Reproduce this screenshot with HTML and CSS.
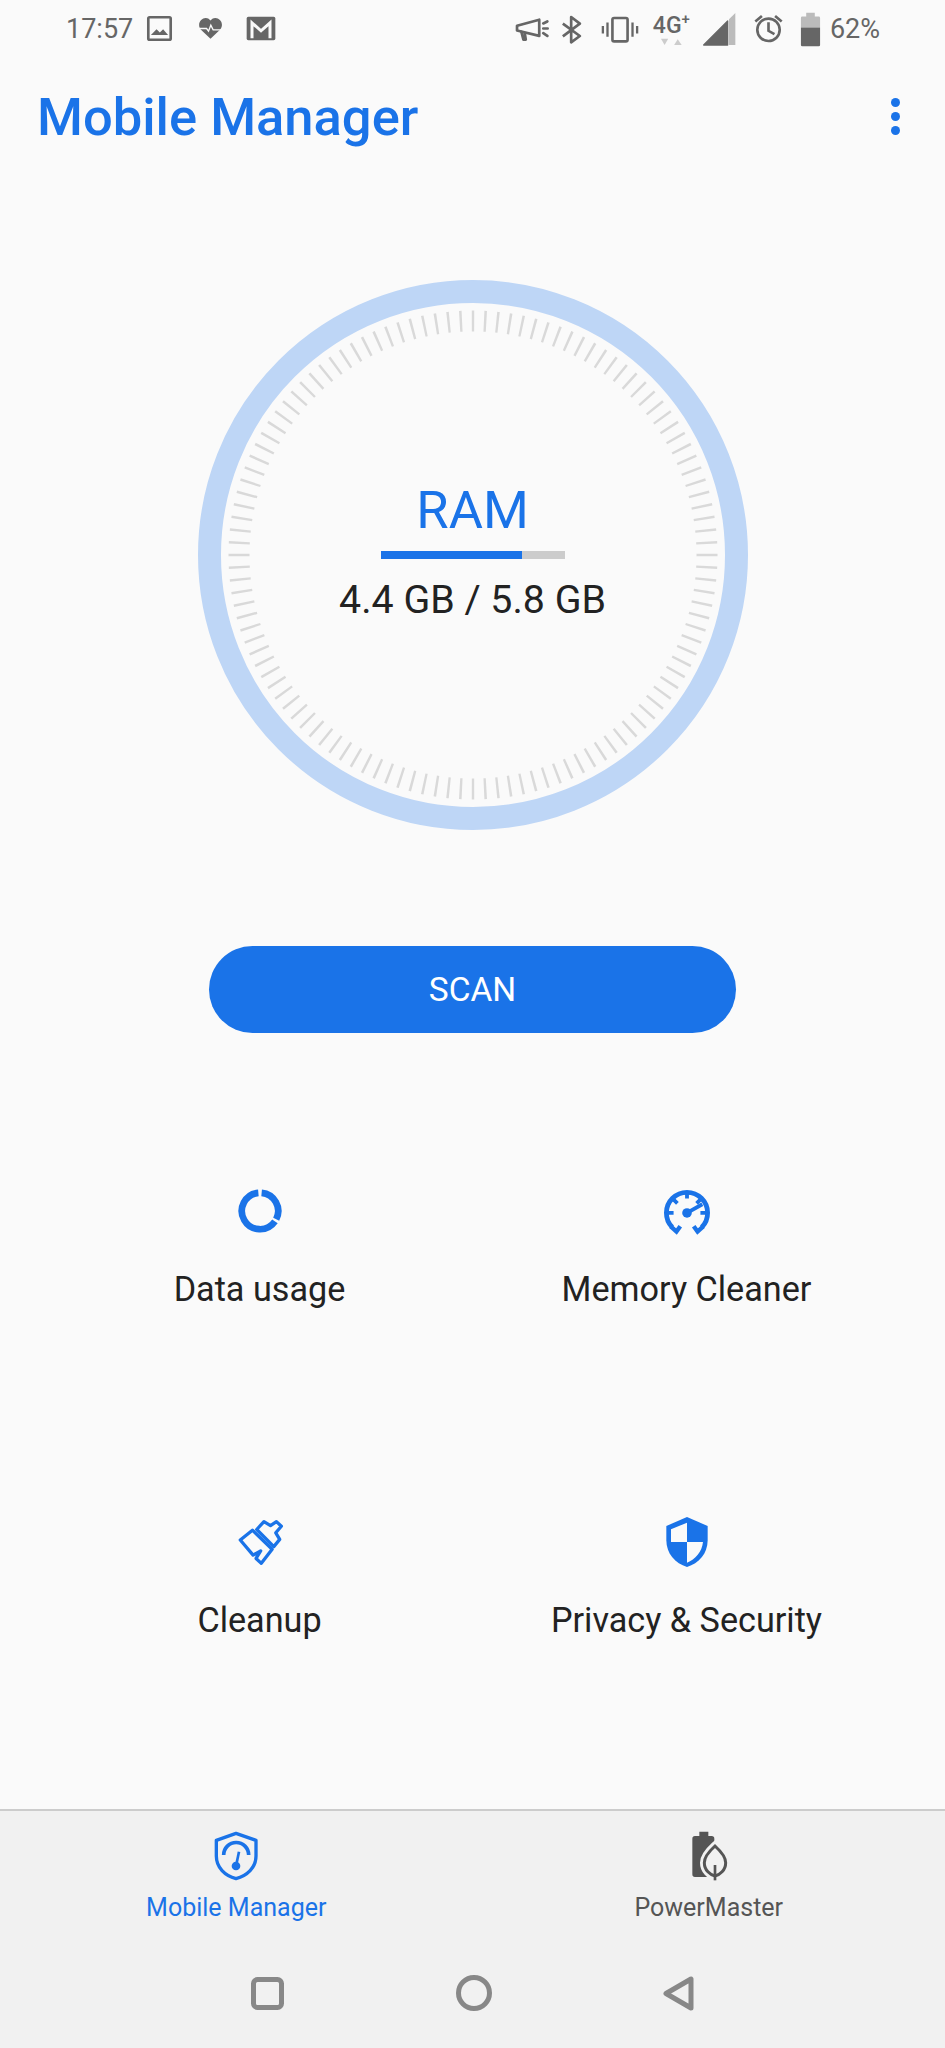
FILE: index.html
```html
<!DOCTYPE html>
<html lang="en">
<head>
  <meta charset="UTF-8">
  <meta name="viewport" content="width=device-width, initial-scale=1.0">
  <title>Mobile Manager</title>
  <link rel="stylesheet" href="styles.css">
</head>
<body>

<div class="statusbar">
  <div class="status-left">
    <span class="status-text">17:57</span>
    <svg class="si si-image" viewBox="440 42 82 82"><rect x="447" y="49" width="68" height="68" rx="4" fill="none" stroke="#666" stroke-width="8"/><path d="M455 103L472 85L482 95L492 85L507 103Z" fill="#666"/></svg>
    <svg class="si si-heart" viewBox="595 50 76 68"><path d="M633 115L604 88C590 70 605 52 618 52C626 52 630 56 633 60C636 56 640 52 648 52C662 52 676 70 662 88Z" fill="#666"/><path d="M598 84H621L627 92L634 74L641 88H668" fill="none" stroke="#fafafa" stroke-width="4"/></svg>
    <svg class="si si-mail" viewBox="740 46 90 74"><rect x="742" y="48" width="86" height="70" rx="5" fill="#666"/><path d="M758 112V66L785 90L812 66V112" fill="none" stroke="#fafafa" stroke-width="9"/></svg>
  </div>
  <div class="status-right">
    <svg class="si si-mega" viewBox="128 48 104 74"><g fill="none" stroke="#666" stroke-width="8" stroke-linecap="round" stroke-linejoin="round"><path d="M137 74L203 56V104L137 88Z"/><path d="M150 92L156 115H163L160 96"/><path d="M215 67L227 61M215 82H228M215 96L227 104"/></g></svg>
    <svg class="si si-bt" viewBox="268 40 62 87"><path d="M273 66L324 103L298 122V46L324 66L273 104" fill="none" stroke="#666" stroke-width="8" stroke-linejoin="round"/></svg>
    <svg class="si si-vib" viewBox="386 40 114 82"><rect x="420" y="46" width="46" height="71" rx="5" fill="none" stroke="#666" stroke-width="8"/><path d="M405 60V103M481 60V103M391 70V93M495 70V93" stroke="#666" stroke-width="7"/></svg>
    <div class="net">
      <span class="net-label">4G<sup>+</sup></span>
      <svg class="net-arrows" viewBox="562 112 70 22"><path d="M565 113H587L576 132Z" fill="#ccc"/><path d="M605 132H628L616 115Z" fill="#ccc"/></svg>
    </div>
    <svg class="si si-signal" viewBox="690 33 102 102"><path d="M695 132L767 60V132Z" fill="#666" stroke="#666" stroke-width="4" stroke-linejoin="round"/><path d="M771 55L790 36V132H771Z" fill="#bbb"/></svg>
    <svg class="si si-alarm" viewBox="844 38 88 89"><g fill="none" stroke="#666" stroke-width="8"><circle cx="888" cy="85" r="34"/><path d="M888 62V88L906 98"/><path d="M848 60L868 43M908 43L928 60"/></g></svg>
    <svg class="si si-batt" viewBox="984 28 62 106"><path d="M1002 30H1028V42H1040Q1044 42 1044 46V75H986V46Q986 42 990 42H1002Z" fill="#bbb"/><path d="M986 75H1044V128Q1044 132 1040 132H990Q986 132 986 128Z" fill="#666"/></svg>
    <span class="status-text">62%</span>
  </div>
</div>

<div class="header">
  <h1>Mobile Manager</h1>
  <div class="more"><span></span><span></span><span></span></div>
</div>

<div class="gauge">
  <svg class="gauge-dial" viewBox="0 0 550 550">
    <circle class="gauge-ring" cx="275" cy="275" r="263.5"/>
    <circle class="gauge-ticks" cx="275" cy="275" r="234" pathLength="120" transform="rotate(-90 275 275)"/>
  </svg>
  <div class="gauge-info">
    <div class="gauge-title">RAM</div>
    <div class="gauge-bar"><div class="gauge-fill" style="width:77%"></div></div>
    <div class="gauge-value">4.4 GB / 5.8 GB</div>
  </div>
</div>

<button class="scan">SCAN</button>

<div class="tools">
  <div class="tool">
    <svg class="tool-icon" viewBox="0 0 48 48"><g fill="none" stroke="#1a73e8" stroke-width="7"><path d="M25.7 5.1A19 19 0 0 1 40.9 32.6"/><path d="M39.6 34.9A19 19 0 1 1 22.3 5.1"/></g></svg>
    <div class="tool-name">Data usage</div>
  </div>
  <div class="tool">
    <svg class="tool-icon" viewBox="0 0 48 48"><g fill="none" stroke="#1a73e8" stroke-width="5"><path d="M8.6 41A21.5 21.5 0 1 1 39.4 41"/><path d="M7 40L13 45.5L17 40M41 40L35 45.5L31 40" stroke-width="4.5"/><path d="M24 4V11M3 26H10M38 26H45M9 11L14 16M39 11L34 16" stroke-width="4"/><path d="M24 26L40 17" stroke-width="4"/></g><circle cx="24" cy="26" r="5" fill="#1a73e8"/></svg>
    <div class="tool-name">Memory Cleaner</div>
  </div>
  <div class="tool">
    <svg class="tool-icon" viewBox="48 58 140 140"><g fill="none" stroke="#1a73e8" stroke-width="10" stroke-linejoin="round"><path d="M58 122L95 92L155 150L122 193L106 178L120 155L97 168Z"/><path d="M108 90L130 66L150 78L168 66L183 80L166 100L178 120L160 142Z"/></g></svg>
    <div class="tool-name">Cleanup</div>
  </div>
  <div class="tool">
    <svg class="tool-icon" viewBox="71 61 138 138"><path d="M140 55L202 82V125C202 165 175 195 140 205C105 195 78 165 78 125V82Z" fill="#1a73e8"/><path d="M92 130V92L140 72V130ZM140 130H188C185 160 165 182 140 192Z" fill="#fafafa"/></svg>
    <div class="tool-name">Privacy &amp; Security</div>
  </div>
</div>

<div class="tabs">
  <div class="tab tab-active">
    <svg class="tab-icon" viewBox="335 117 144 156"><g fill="none" stroke="#1a73e8"><path d="M407 127L467 148V195C467 230 440 254 407 263C374 254 348 230 348 195V148Z" stroke-width="10" stroke-linejoin="round"/><path d="M370 192A37.5 37.5 0 0 1 445 192" stroke-width="11"/><path d="M407 225L416 182" stroke-width="8"/></g><circle cx="407" cy="225" r="13" fill="#1a73e8"/></svg>
    <span>Mobile Manager</span>
  </div>
  <div class="tab">
    <svg class="tab-icon" viewBox="552 117 144 156"><path d="M595 122H622V135H632Q640 135 640 143V250Q640 258 632 258H582Q574 258 574 250V143Q574 135 582 135H595Z" fill="#555"/><path d="M642 165C620 185 610 200 610 215C610 238 628 252 642 255C656 252 674 238 674 215C674 200 664 185 642 165Z" fill="#f1f1f1" stroke="#f1f1f1" stroke-width="26"/><path d="M642 165C620 185 610 200 610 215C610 238 628 252 642 255C656 252 674 238 674 215C674 200 664 185 642 165Z" fill="#f1f1f1" stroke="#555" stroke-width="9"/><path d="M642 222V268" stroke="#555" stroke-width="8"/></svg>
    <span>PowerMaster</span>
  </div>
</div>

<div class="navbar">
  <svg class="nav-square" viewBox="0 0 33 33"><rect x="2.5" y="2.5" width="28" height="28" rx="4" fill="none" stroke="#888" stroke-width="5"/></svg>
  <svg class="nav-circle" viewBox="0 0 36 36"><circle cx="18" cy="18" r="15.5" fill="none" stroke="#888" stroke-width="5"/></svg>
  <svg class="nav-back" viewBox="0 0 31 35"><path d="M3 17.5L28 3V32Z" fill="none" stroke="#888" stroke-width="5" stroke-linejoin="round"/></svg>
</div>

</body>
</html>
```

FILE: styles.css
```css
* {
  box-sizing: border-box;
}

body {
  margin: 0;
  width: 945px;
  height: 2048px;
  overflow: hidden;
  font-family: Roboto, Arial, sans-serif;
  background-color: #fafafa;
  color: #222;
  display: flex;
  flex-direction: column;
}

body > * {
  flex: none;
}

/* status bar */
.statusbar {
  height: 58px;
  padding: 0 65px 0 66px;
  display: flex;
  justify-content: space-between;
  align-items: center;
  color: #666;
}

.status-left, .status-right {
  display: flex;
  align-items: center;
}

.status-text {
  font-size: 27px;
}

.si {
  display: block;
  flex: none;
}

.si-image { width: 27px; height: 27px; margin-left: 13px; margin-top: -2px; }
.si-heart { width: 25px; height: 23px; margin-left: 25px; margin-top: -2px; }
.si-mail { width: 30px; height: 25px; margin-left: 23px; margin-top: -2px; }

.si-mega { width: 35px; height: 25px; }
.si-bt { width: 21px; height: 29px; margin-left: 12px; }
.si-vib { width: 38px; height: 27px; margin-left: 19px; }
.si-signal { width: 34px; height: 34px; margin-left: 12px; }
.si-alarm { width: 29px; height: 30px; margin-left: 18px; }
.si-batt { width: 21px; height: 35px; margin-left: 17px; margin-right: 9px; }

.net {
  width: 37px;
  margin-left: 14px;
  display: flex;
  flex-direction: column;
  align-items: center;
}

.net-label {
  font-size: 23px;
  line-height: 25px;
  font-weight: 500;
  white-space: nowrap;
}

.net-label sup {
  font-size: 15px;
  line-height: 0;
}

.net-arrows {
  width: 23px;
  height: 8px;
}

/* title row */
.header {
  height: 117px;
  padding: 0 45px 0 37px;
  display: flex;
  justify-content: space-between;
  align-items: center;
}

.header h1 {
  margin: 0;
  font-size: 52.5px;
  font-weight: 500;
  color: #1a73e8;
}

.more {
  display: flex;
  flex-direction: column;
  gap: 5px;
}

.more span {
  width: 9px;
  height: 9px;
  border-radius: 50%;
  background: #1a73e8;
}

/* RAM dial */
.gauge {
  margin: 105px auto 0;
  width: 550px;
  height: 550px;
  display: grid;
}

.gauge-dial, .gauge-info {
  grid-area: 1 / 1;
}

.gauge-ring {
  fill: none;
  stroke: #bed6f6;
  stroke-width: 23;
}

.gauge-ticks {
  fill: none;
  stroke: #d9d9d9;
  stroke-width: 21;
  stroke-dasharray: 0.2 0.8;
  stroke-dashoffset: 0.1;
}

.gauge-info {
  display: flex;
  flex-direction: column;
  align-items: center;
  padding-top: 189px;
}

.gauge-title {
  font-size: 52.5px;
  line-height: 82px;
  color: #1a73e8;
}

.gauge-bar {
  width: 184px;
  height: 8px;
  background: #ccc;
}

.gauge-fill {
  height: 100%;
  background: #1a73e8;
}

.gauge-value {
  margin-top: 16px;
  font-size: 39.3px;
  line-height: 50px;
}

/* scan */
.scan {
  margin: 116px auto 0;
  width: 527px;
  height: 87px;
  border: none;
  border-radius: 44px;
  background: #1a73e8;
  color: white;
  font-family: inherit;
  font-size: 33.5px;
}

/* tool grid */
.tools {
  margin-top: 155px;
  padding: 0 45px 0 46px;
  display: grid;
  grid-template-columns: 1fr 1fr;
  row-gap: 205px;
}

.tool {
  display: flex;
  flex-direction: column;
  align-items: center;
}

.tool-icon {
  width: 46px;
  height: 46px;
  overflow: visible;
}

.tool-name {
  margin-top: 30px;
  font-size: 34.2px;
  line-height: 50px;
}

/* bottom tabs */
.tabs {
  margin-top: auto;
  height: 123px;
  border-top: 2px solid #ccc;
  background: #f1f1f1;
  display: grid;
  grid-template-columns: 1fr 1fr;
}

.tab {
  padding-top: 19px;
  display: flex;
  flex-direction: column;
  align-items: center;
  font-size: 25px;
  color: #555;
}

.tab-active {
  color: #1a73e8;
}

.tab-icon {
  width: 48px;
  height: 52px;
}

.tab span {
  margin-top: 11px;
}

.navbar {
  height: 116px;
  padding: 6px 251px 0;
  background: #f1f1f1;
  display: flex;
  justify-content: space-between;
  align-items: center;
}

.nav-square {
  width: 33px;
  height: 33px;
}

.nav-circle {
  width: 36px;
  height: 36px;
}

.nav-back {
  width: 31px;
  height: 35px;
}
```
